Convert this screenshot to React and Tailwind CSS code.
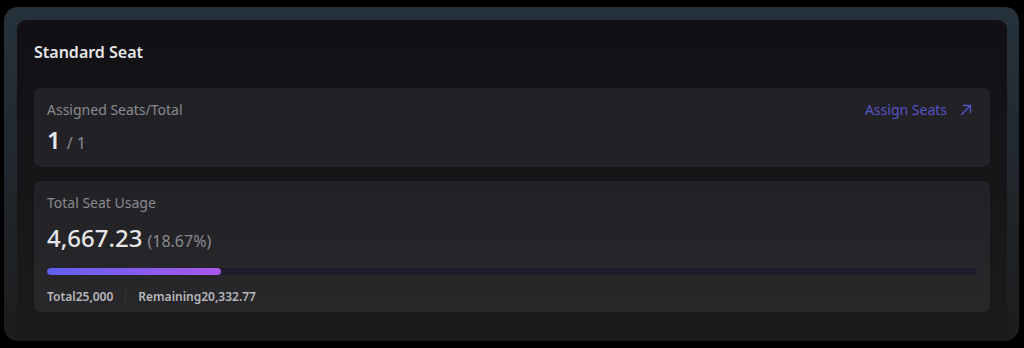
import React from "react";

function ArrowUpRight() {
    return (
        <svg width="14" height="14" viewBox="0 0 14 14" fill="none" stroke="currentColor" strokeWidth="1.4" strokeLinecap="round" strokeLinejoin="round">
            <path d="M2.5 11.5L11.5 2.5" />
            <path d="M4.5 2.5H11.5V9.5" />
        </svg>
    );
}

function App() {
    const used = 4667.23;
    const total = 25000;
    const pct = (used / total) * 100;

    return (
        <div className="w-[1024px] h-[348px] bg-black pt-[7px] px-[4px] font-['Noto_Sans',_'Open_Sans',_sans-serif]">
            <div className="w-[1015px] h-[334px] rounded-[14px] bg-gradient-to-b from-[#25323c] to-[#1c1c1d] pt-[13px] pl-[13px] pr-[12px]">
                <div className="h-[321px] rounded-t-[9px] bg-gradient-to-b from-[#111115] to-[#1b1b1d] px-[17px] pt-[20px]">
                    <h2 className="text-[16px] leading-[24px] font-semibold text-[#e6e6e8]">Standard Seat</h2>

                    <div className="mt-[24px] h-[79px] rounded-[7px] bg-[#222226] px-[13px] pt-[12px]">
                        <div className="flex items-center justify-between">
                            <span className="text-[14px] leading-[20px] text-[#8a8a90]">Assigned Seats/Total</span>
                            <a className="flex items-center gap-[12px] text-[14px] leading-[20px] text-[#5753c9] pr-[4px]">
                                Assign Seats
                                <ArrowUpRight />
                            </a>
                        </div>
                        <div className="mt-[5px] flex items-baseline gap-[6px]">
                            <span className="text-[24px] leading-[30px] font-semibold text-[#e6e6e8]">1</span>
                            <span className="text-[16px] text-[#8a8a90]">/ 1</span>
                        </div>
                    </div>

                    <div className="mt-[14px] h-[131px] rounded-[7px] bg-gradient-to-b from-[#222226] to-[#28282b] px-[13px] pt-[12px]">
                        <div className="text-[14px] leading-[20px] text-[#8a8a90]">Total Seat Usage</div>
                        <div className="mt-[9px] flex items-baseline gap-[5px]">
                            <span className="text-[24px] leading-[32px] font-medium text-[#e6e6e8]">4,667.23</span>
                            <span className="text-[16px] text-[#8a8a90]">(18.67%)</span>
                        </div>
                        <div className="mt-[14px] h-[7px] w-full rounded-full bg-[#1d1d2e] overflow-hidden">
                            <div className="h-full rounded-full bg-gradient-to-r from-[#5f5ff0] to-[#a856ec]" style={{ width: pct + "%" }} />
                        </div>
                        <div className="mt-[14px] flex items-center text-[12px] leading-[16px] font-semibold text-[#b7b7bb]">
                            <span>Total25,000</span>
                            <span className="mx-[12px] h-[14px] w-px bg-[#333338]" />
                            <span>Remaining20,332.77</span>
                        </div>
                    </div>
                </div>
            </div>
        </div>
    );
}

export default App;
